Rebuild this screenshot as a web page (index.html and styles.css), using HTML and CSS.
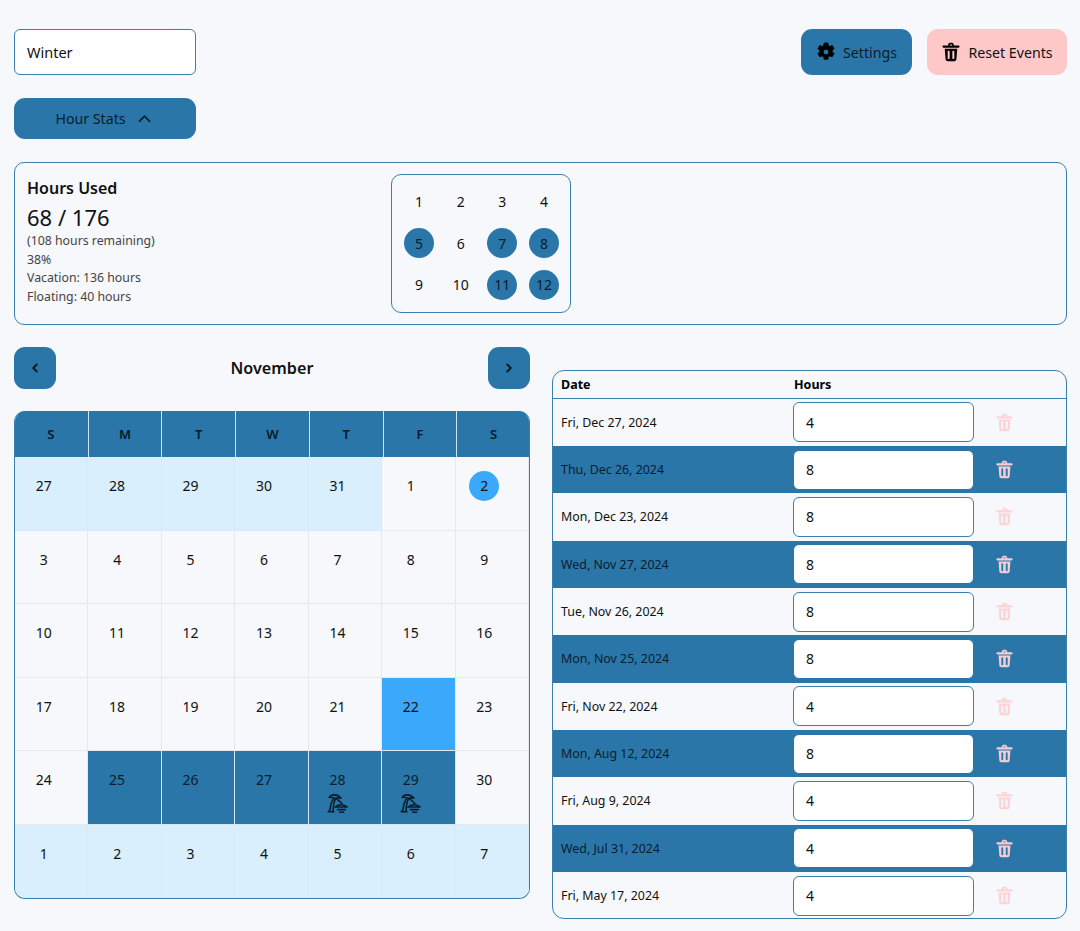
FILE: index.html
```html
<!DOCTYPE html>
<html lang="en">
<head>
<meta charset="utf-8">
<title>Hours</title>
<link rel="stylesheet" href="styles.css">
</head>
<body>
<svg class="defs" width="0" height="0" aria-hidden="true">
  <defs>
    <symbol id="trash" viewBox="0 0 24 24">
      <path fill-rule="evenodd" d="M8.600 3.200C8.900 1.800 10 1 11.200 1h1.600c1.200 0 2.300.8 2.600 2.200l.3 1H21a1.200 1.200 0 0 1 0 2.600H3a1.200 1.200 0 0 1 0-2.600h5.300zM10.400 4.200h3.200l-.2-.8c-.1-.3-.3-.4-.6-.4h-1.600c-.3 0-.5.1-.6.4zM4.500 8.200h15l-1 12.600c-.1 1.300-1.200 2.200-2.500 2.200H8c-1.300 0-2.400-.9-2.500-2.200zM9.200 10.500c-.7 0-1.200.5-1.200 1.200v7.600c0 .7.500 1.200 1.200 1.200s1.200-.5 1.200-1.200v-7.600c0-.7-.5-1.200-1.200-1.200zM14.800 10.500c-.7 0-1.200.5-1.200 1.200v7.600c0 .7.500 1.200 1.200 1.200s1.200-.5 1.200-1.200v-7.600c0-.7-.5-1.200-1.200-1.200z"/>
    </symbol>
    <symbol id="gear" viewBox="0 0 24 24">
      <path fill-rule="evenodd" d="M9.800 1.200h4.400l.6 3.100 1.700 1 3-1 2.200 3.800-2.400 2.100v1.600l2.400 2.100-2.200 3.800-3-1-1.700 1-.6 3.100H9.800l-.6-3.100-1.700-1-3 1-2.200-3.800 2.400-2.100v-1.600L2.300 8.100l2.200-3.800 3 1 1.700-1zM12 8.600a3.400 3.400 0 1 0 0 6.800 3.400 3.400 0 0 0 0-6.800z" stroke="#000" stroke-width="1" stroke-linejoin="round"/>
    </symbol>
    <symbol id="beach" viewBox="0 0 24 24">
      <g fill="none" stroke="currentColor" stroke-width="1.800" stroke-linecap="round" stroke-linejoin="round">
        <path d="M2.500 5C5 1 12 1 16 6c-3-1-5-1-6.500.5C7.500 5 5 4.500 2.500 5z"/>
        <path d="M7 7c-2.500 4-3.500 8-3.500 12l-2 2.500H8"/>
        <path d="M9.500 7c-2 4-2.500 8-2.500 14"/>
        <path d="M11 6.500l6 5.500"/>
        <path d="M10 16c2-3.500 10-3.500 13 0H9"/>
        <path d="M12 19h9M14.500 22H19"/>
      </g>
    </symbol>
  </defs>
</svg>

<main class="page">
  <div class="top-row">
    <input class="field name-field" type="text" value="Winter" aria-label="Schedule name">
    <div class="top-actions">
      <button class="btn btn-primary" type="button"><svg class="btn-icon"><use href="#gear"/></svg>Settings</button>
      <button class="btn btn-danger" type="button"><svg class="btn-icon"><use href="#trash"/></svg>Reset Events</button>
    </div>
  </div>

  <button class="btn btn-primary stats-toggle" type="button">Hour Stats
    <svg class="chevron" viewBox="0 0 16 16"><path d="M2.500 11 8 5.500l5.500 5.500"/></svg>
  </button>

  <section class="stats-panel">
    <div class="stats-text">
      <h2 class="stats-title">Hours Used</h2>
      <div class="stats-value">68 / 176</div>
      <div class="stats-note">(108 hours remaining)</div>
      <div class="stats-note">38%</div>
      <div class="stats-note">Vacation: 136 hours</div>
      <div class="stats-note">Floating: 40 hours</div>
    </div>
    <div class="month-grid">
      <span class="month">1</span><span class="month">2</span><span class="month">3</span><span class="month">4</span>
      <span class="month on">5</span><span class="month">6</span><span class="month on">7</span><span class="month on">8</span>
      <span class="month">9</span><span class="month">10</span><span class="month on">11</span><span class="month on">12</span>
    </div>
  </section>

  <div class="columns">
    <section class="cal-col">
      <div class="cal-nav">
        <button class="btn btn-primary nav-btn" type="button" aria-label="Previous"><svg class="nav-icon" viewBox="0 0 16 16"><path d="M10 4 6 8l4 4"/></svg></button>
        <h2 class="cal-title">November</h2>
        <button class="btn btn-primary nav-btn" type="button" aria-label="Next"><svg class="nav-icon" viewBox="0 0 16 16"><path d="m6 4 4 4-4 4"/></svg></button>
      </div>
      <div class="calendar">
        <div class="cal-head"><span>S</span><span>M</span><span>T</span><span>W</span><span>T</span><span>F</span><span>S</span></div>
        <div class="cal-body">
          <div class="day other">27</div><div class="day other">28</div><div class="day other">29</div><div class="day other">30</div><div class="day other">31</div><div class="day">1</div><div class="day"><span class="today">2</span></div>
          <div class="day">3</div><div class="day">4</div><div class="day">5</div><div class="day">6</div><div class="day">7</div><div class="day">8</div><div class="day">9</div>
          <div class="day">10</div><div class="day">11</div><div class="day">12</div><div class="day">13</div><div class="day">14</div><div class="day">15</div><div class="day">16</div>
          <div class="day">17</div><div class="day">18</div><div class="day">19</div><div class="day">20</div><div class="day">21</div><div class="day holiday">22</div><div class="day">23</div>
          <div class="day">24</div><div class="day booked">25</div><div class="day booked">26</div><div class="day booked">27</div><div class="day booked">28<svg class="beach"><use href="#beach"/></svg></div><div class="day booked">29<svg class="beach"><use href="#beach"/></svg></div><div class="day">30</div>
          <div class="day other">1</div><div class="day other">2</div><div class="day other">3</div><div class="day other">4</div><div class="day other">5</div><div class="day other">6</div><div class="day other">7</div>
        </div>
      </div>
    </section>

    <section class="events">
      <div class="ev-head"><span>Date</span><span>Hours</span></div>
      <div class="ev-row"><span>Fri, Dec 27, 2024</span><input class="field hours" type="text" value="4" aria-label="Hours"><svg class="del"><use href="#trash"/></svg></div>
      <div class="ev-row alt"><span>Thu, Dec 26, 2024</span><input class="field hours" type="text" value="8" aria-label="Hours"><svg class="del"><use href="#trash"/></svg></div>
      <div class="ev-row"><span>Mon, Dec 23, 2024</span><input class="field hours" type="text" value="8" aria-label="Hours"><svg class="del"><use href="#trash"/></svg></div>
      <div class="ev-row alt"><span>Wed, Nov 27, 2024</span><input class="field hours" type="text" value="8" aria-label="Hours"><svg class="del"><use href="#trash"/></svg></div>
      <div class="ev-row"><span>Tue, Nov 26, 2024</span><input class="field hours" type="text" value="8" aria-label="Hours"><svg class="del"><use href="#trash"/></svg></div>
      <div class="ev-row alt"><span>Mon, Nov 25, 2024</span><input class="field hours" type="text" value="8" aria-label="Hours"><svg class="del"><use href="#trash"/></svg></div>
      <div class="ev-row"><span>Fri, Nov 22, 2024</span><input class="field hours" type="text" value="4" aria-label="Hours"><svg class="del"><use href="#trash"/></svg></div>
      <div class="ev-row alt"><span>Mon, Aug 12, 2024</span><input class="field hours" type="text" value="8" aria-label="Hours"><svg class="del"><use href="#trash"/></svg></div>
      <div class="ev-row"><span>Fri, Aug 9, 2024</span><input class="field hours" type="text" value="4" aria-label="Hours"><svg class="del"><use href="#trash"/></svg></div>
      <div class="ev-row alt"><span>Wed, Jul 31, 2024</span><input class="field hours" type="text" value="4" aria-label="Hours"><svg class="del"><use href="#trash"/></svg></div>
      <div class="ev-row"><span>Fri, May 17, 2024</span><input class="field hours" type="text" value="4" aria-label="Hours"><svg class="del"><use href="#trash"/></svg></div>
    </section>
  </div>
</main>
</body>
</html>
```
FILE: styles.css
```css
* { box-sizing: border-box; }
html, body { margin: 0; height: 931px; overflow: hidden; }
body {
  background: #f6f8fc;
  color: #111;
  font-family: "Noto Sans", "Open Sans", "Liberation Sans", sans-serif;
  font-size: 14px;
}
.defs { position: absolute; }
.page { padding: 29px 13px 0 14px; }
.top-row { display: flex; justify-content: space-between; }
.field {
  background: #fff;
  border: 1px solid #3a80ad;
  border-radius: 6px;
  color: #111;
  font: inherit;
  outline: none;
}
.name-field { width: 182px; height: 46px; padding: 0 12px; font-size: 14.500px; }
.top-actions { display: flex; gap: 15px; }
.btn {
  display: flex;
  align-items: center;
  justify-content: center;
  border: 0;
  border-radius: 11px;
  color: #0a1c2c;
  font: inherit;
  font-size: 14.200px;
  padding: 0;
}
.btn-primary { background: #2a76a9; }
.btn-danger { background: #fec8c8; color: #111; }
.top-actions .btn { height: 46px; gap: 7px; }
.top-actions .btn-primary { width: 111px; }
.top-actions .btn-danger { width: 140px; }
.btn-icon { width: 20px; height: 20px; fill: #000; flex: none; }
.stats-toggle { width: 182px; height: 41px; margin-top: 23px; gap: 11px; padding-right: 3px; }
.chevron { width: 15px; height: 15px; fill: none; stroke: #0a1c2c; stroke-width: 1.800; stroke-linecap: round; stroke-linejoin: round; }
.stats-panel {
  display: flex;
  align-items: flex-start;
  height: 163px;
  margin-top: 23px;
  padding: 11px 12px;
  border: 1px solid #3a80ad;
  border-radius: 10px;
}
.stats-text { width: 364px; padding-top: 3px; }
.stats-title { margin: 0; font-size: 16px; font-weight: 600; line-height: 22px; }
.stats-value { font-size: 22px; line-height: 30px; margin-top: 3px; }
.stats-note { font-size: 12.300px; line-height: 18.700px; color: #444; }
.month-grid {
  display: grid;
  grid-template-columns: repeat(4, 30px);
  grid-auto-rows: 30px;
  column-gap: 11.670px;
  row-gap: 11.500px;
  width: 180px;
  height: 139px;
  padding: 11px 10px 12px 11px;
  border: 1px solid #3a80ad;
  border-radius: 10px;
  align-content: center;
  justify-content: center;
}
.month { display: flex; align-items: center; justify-content: center; border-radius: 50%; font-size: 14px; }
.month.on { background: #2a76a9; color: #0a1c2c; }
.columns { display: flex; gap: 22px; margin-top: 22px; align-items: flex-start; }
.cal-col { width: 516px; }
.cal-nav { display: flex; justify-content: space-between; align-items: center; height: 42px; }
.nav-btn { width: 42px; height: 42px; }
.nav-icon { width: 14px; height: 14px; fill: none; stroke: #0c1820; stroke-width: 2.200; stroke-linecap: round; stroke-linejoin: round; }
.cal-title { margin: 0; font-size: 16.200px; font-weight: 600; }
.calendar {
  margin-top: 22px;
  height: 488px;
  border: 1px solid #3a80ad;
  border-top: 0;
  border-radius: 11px;
  overflow: hidden;
  display: flex;
  flex-direction: column;
}
.cal-head {
  display: grid;
  grid-template-columns: repeat(7, 1fr);
  height: 46px;
  margin: 0 -1px;
  background: #2a76a9;
  flex: none;
}
.cal-head span {
  display: flex;
  align-items: center;
  justify-content: center;
  font-size: 13px;
  font-weight: 600;
  color: #0a1826;
  border-left: 1px solid #cfe3f0;
}
.cal-head span:first-child { border-left: 0; }
.cal-body { flex: 1; display: grid; grid-template-columns: repeat(7, 1fr); grid-template-rows: repeat(6, 1fr); }
.day {
  display: flex;
  flex-direction: column;
  align-items: center;
  padding-top: 19px;
  padding-right: 15px;
  font-size: 14px;
  line-height: 20px;
  border-right: 1px solid #e6e8ec;
  border-bottom: 1px solid #e6e8ec;
}
.day.other { background: #d9effd; border-color: #d5ebf9; }
.day.holiday { background: #3aa9fb; }
.day.booked { background: #2a76a9; color: #0a1c2c; border-color: #d8e6f0; }
.today {
  display: flex;
  align-items: center;
  justify-content: center;
  width: 30px;
  height: 30px;
  margin-top: -5px;
  border-radius: 50%;
  background: #3aa9fb;
}
.beach { width: 21px; height: 21px; margin-top: 3px; color: #0a1c2c; }
.events {
  flex: 1;
  margin-top: 23px;
  height: 549px;
  border: 1px solid #3a80ad;
  border-radius: 12px;
  overflow: hidden;
}
.ev-head {
  display: grid;
  grid-template-columns: 233px 1fr;
  align-items: center;
  height: 27.500px;
  padding-left: 8px;
  font-size: 12.500px;
  font-weight: 700;
  color: #000;
  border-bottom: 1px solid #3a80ad;
}
.ev-row {
  display: grid;
  grid-template-columns: 232px 181px 60px;
  align-items: center;
  height: 47.350px;
  padding-left: 8px;
  font-size: 12.400px;
}
.ev-row.alt { background: #2a76a9; color: #0a1c2c; }
.hours { width: 181px; height: 40px; padding: 0 11px 0 12px; font-size: 14px; }
.del { width: 19px; height: 19px; justify-self: center; fill: #fdd3d5; }
.alt .del { fill: #f6ccd3; }
.alt .hours { border-color: #2a76a9; }
```
